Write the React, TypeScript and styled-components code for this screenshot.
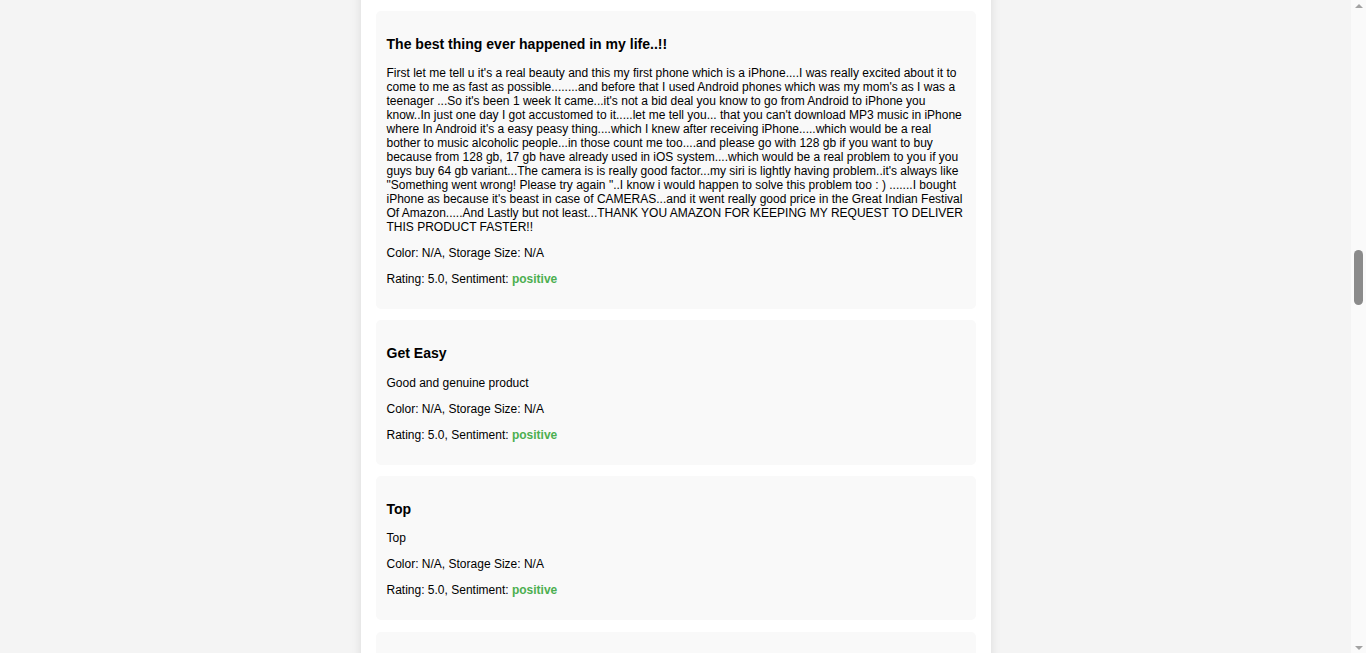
import React, { useLayoutEffect, useRef } from "react";
import styled, { createGlobalStyle } from "styled-components";

const GlobalStyle = createGlobalStyle`
  html {
    scrollbar-width: none;
  }
  html::-webkit-scrollbar {
    display: none;
  }
  html, body {
    margin: 0;
    padding: 0;
    background: #f4f4f4;
  }
  body {
    font-family: "Liberation Sans", Arial, sans-serif;
    color: #000;
  }
`;

const Viewport = styled.div`
  padding-right: 15px;
`;

const Page = styled.div`
  width: 630px;
  margin: 0 auto;
  background: #ffffff;
  padding: 15px;
  box-sizing: border-box;
  box-shadow: 0 0 10px rgba(0, 0, 0, 0.1);
  font-size: 12px;
`;

const ReviewList = styled.div`
  display: flex;
  flex-direction: column;
  gap: 11.5px;
`;

const Card = styled.article`
  background: #f9f9f9;
  border-radius: 5px;
  padding: 11px;
`;

const Title = styled.h3`
  font-size: 1.17em;
  font-weight: bold;
  margin: 1em 0;
`;

const Text = styled.p`
  margin: 12px 0;
  line-height: normal;
`;

const Sentiment = styled.span<{ $tone: "positive" | "negative" | "neutral" }>`
  font-weight: bold;
  color: ${(p) =>
    p.$tone === "positive" ? "#4caf50" : p.$tone === "negative" ? "#f44336" : "#888"};
`;

/* Drawn window scrollbar (the capture hides native scrollbars) */
const ScrollTrack = styled.div`
  position: fixed;
  top: 0;
  right: 0;
  width: 15px;
  height: 100vh;
  background: #fafafa;
  display: flex;
  flex-direction: column;
  align-items: center;
  justify-content: space-between;
`;

const ScrollArrow = styled.div<{ $dir: "up" | "down" }>`
  width: 15px;
  height: 15px;
  display: flex;
  align-items: center;
  justify-content: center;
  &::before {
    content: "";
    width: 0;
    height: 0;
    border-left: 4px solid transparent;
    border-right: 4px solid transparent;
    ${(p) =>
      p.$dir === "up"
        ? "border-bottom: 4px solid #a3a3a3; margin-top: -4px;"
        : "border-top: 4px solid #a3a3a3; margin-bottom: -4px;"}
  }
`;

const ScrollThumb = styled.div`
  position: absolute;
  top: 250px;
  left: 3px;
  width: 9px;
  height: 55px;
  border-radius: 5px;
  background: #8b8b8b;
`;

type Review = {
  title: string;
  body: string;
  color: string;
  storage: string;
  rating: string;
  sentiment: "positive" | "negative" | "neutral";
};

const longReview: Review = {
  title: "The best thing ever happened in my life..!!",
  body:
    "First let me tell u it's a real beauty and this my first phone which is a iPhone....I was really excited about it to come to me as fast as possible........and before that I used Android phones which was my mom's as I was a teenager ...So it's been 1 week It came...it's not a bid deal you know to go from Android to iPhone you know..In just one day I got accustomed to it.....let me tell you... that you can't download MP3 music in iPhone where In Android it's a easy peasy thing....which I knew after receiving iPhone.....which would be a real bother to music alcoholic people...in those count me too....and please go with 128 gb if you want to buy because from 128 gb, 17 gb have already used in iOS system....which would be a real problem to you if you guys buy 64 gb variant...The camera is is really good factor...my siri is lightly having problem..it's always like \"Something went wrong! Please try again \"..I know i would happen to solve this problem too : ) .......I bought iPhone as because it's beast in case of CAMERAS...and it went really good price in the Great Indian Festival Of Amazon.....And Lastly but not least...THANK YOU AMAZON FOR KEEPING MY REQUEST TO DELIVER THIS PRODUCT FASTER!!",
  color: "N/A",
  storage: "N/A",
  rating: "5.0",
  sentiment: "positive",
};

const getEasy: Review = {
  title: "Get Easy",
  body: "Good and genuine product",
  color: "N/A",
  storage: "N/A",
  rating: "5.0",
  sentiment: "positive",
};

const top: Review = {
  title: "Top",
  body: "Top",
  color: "N/A",
  storage: "N/A",
  rating: "5.0",
  sentiment: "positive",
};

const SETS = 12;
const TARGET_SET = 4;
const pattern = [getEasy, top, longReview];
const reviews: Review[] = Array.from({ length: SETS }, () => pattern).flat();
const targetIndex = TARGET_SET * pattern.length + 2;

function ReviewCard({ review, innerRef }: { review: Review; innerRef?: React.Ref<HTMLElement> }) {
  return (
    <Card ref={innerRef}>
      <Title>{review.title}</Title>
      <Text>{review.body}</Text>
      <Text>
        Color: {review.color}, Storage Size: {review.storage}
      </Text>
      <Text>
        Rating: {review.rating}, Sentiment:{" "}
        <Sentiment $tone={review.sentiment}>{review.sentiment}</Sentiment>
      </Text>
    </Card>
  );
}

export default function App() {
  const targetRef = useRef<HTMLElement>(null);

  useLayoutEffect(() => {
    const el = targetRef.current;
    if (!el) return;
    const y = el.getBoundingClientRect().top + window.scrollY - 11;
    window.scrollTo(0, y);
  }, []);

  return (
    <>
      <GlobalStyle />
      <Viewport>
        <Page>
          <ReviewList>
            {reviews.map((r, i) => (
              <ReviewCard
                key={i}
                review={r}
                innerRef={i === targetIndex ? targetRef : undefined}
              />
            ))}
          </ReviewList>
        </Page>
      </Viewport>
      <ScrollTrack>
        <ScrollArrow $dir="up" />
        <ScrollThumb />
        <ScrollArrow $dir="down" />
      </ScrollTrack>
    </>
  );
}
